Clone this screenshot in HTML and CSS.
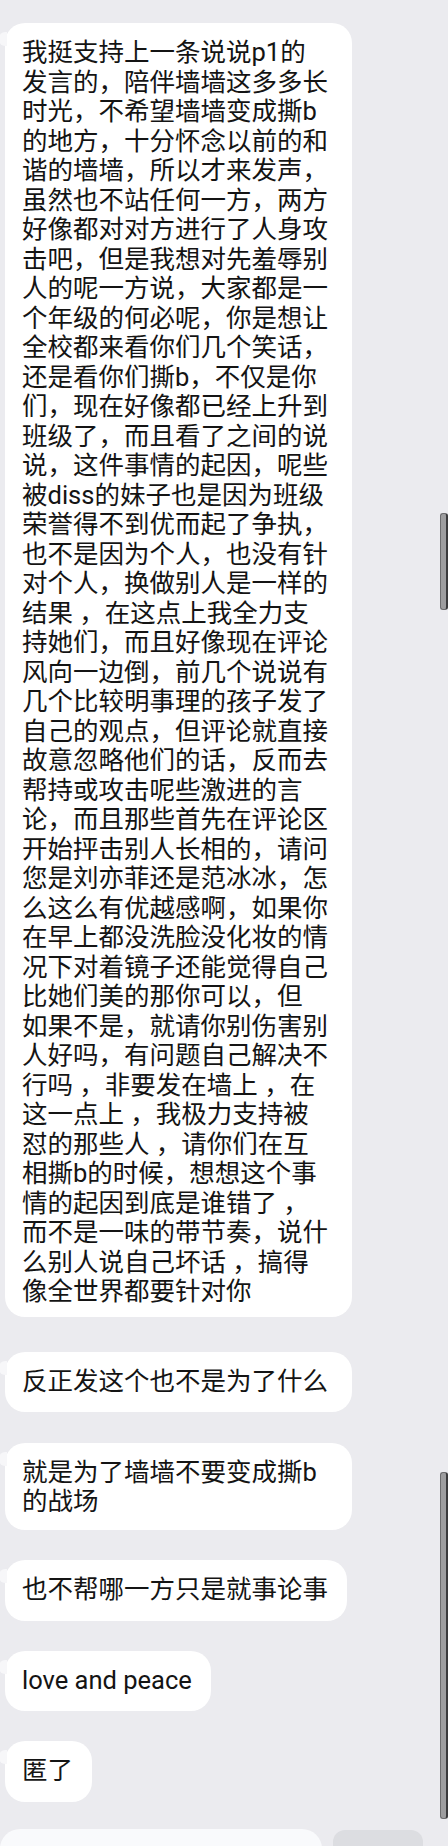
FILE: index.html
```html
<!DOCTYPE html>
<html lang="zh-CN">
<head>
<meta charset="utf-8">
<title>聊天记录</title>
<link rel="stylesheet" href="styles.css">
</head>
<body>
<div class="chat">
  <div class="bubble bubble-wide bubble-long">我挺支持上一条说说p1的<br>发言的，陪伴墙墙这多多长<br>时光，不希望墙墙变成撕b<br>的地方，十分怀念以前的和<br>谐的墙墙，所以才来发声，<br>虽然也不站任何一方，两方<br>好像都对对方进行了人身攻<br>击吧，但是我想对先羞辱别<br>人的呢一方说，大家都是一<br>个年级的何必呢，你是想让<br>全校都来看你们几个笑话，<br>还是看你们撕b，不仅是你<br>们，现在好像都已经上升到<br>班级了，而且看了之间的说<br>说，这件事情的起因，呢些<br>被diss的妹子也是因为班级<br>荣誉得不到优而起了争执，<br>也不是因为个人，也没有针<br>对个人，换做别人是一样的<br>结果 ，在这点上我全力支<br>持她们，而且好像现在评论<br>风向一边倒，前几个说说有<br>几个比较明事理的孩子发了<br>自己的观点，但评论就直接<br>故意忽略他们的话，反而去<br>帮持或攻击呢些激进的言<br>论，而且那些首先在评论区<br>开始抨击别人长相的，请问<br>您是刘亦菲还是范冰冰，怎<br>么这么有优越感啊，如果你<br>在早上都没洗脸没化妆的情<br>况下对着镜子还能觉得自己<br>比她们美的那你可以，但<br>如果不是，就请你别伤害别<br>人好吗，有问题自己解决不<br>行吗 ，非要发在墙上 ，在<br>这一点上 ，我极力支持被<br>怼的那些人 ，请你们在互<br>相撕b的时候，想想这个事<br>情的起因到底是谁错了 ，<br>而不是一味的带节奏，说什<br>么别人说自己坏话 ，搞得<br>像全世界都要针对你</div>
  <div class="bubble bubble-wide bubble-gap-31">反正发这个也不是为了什么</div>
  <div class="bubble bubble-wide bubble-two">就是为了墙墙不要变成撕b<br>的战场</div>
  <div class="bubble">也不帮哪一方只是就事论事</div>
  <div class="bubble">love and peace</div>
  <div class="bubble bubble-last">匿了</div>
  <div class="bottom-row">
    <div class="bottom-bubble"></div>
    <div class="bottom-box"></div>
  </div>
</div>
<div class="thumb thumb-1"></div>
<div class="thumb thumb-2"></div>
</body>
</html>
```
FILE: styles.css
```css
html, body {
  margin: 0;
  padding: 0;
}
body {
  width: 448px;
  height: 1846px;
  overflow: hidden;
  background: #ebebef;
  font-family: Roboto, "Noto Sans CJK SC", sans-serif;
  color: #141414;
  position: relative;
}
.chat {
  display: flex;
  flex-direction: column;
  align-items: flex-start;
  padding: 23px 0 0 5px;
}
.bubble {
  position: relative;
  background: #ffffff;
  border-radius: 20px;
  font-size: 25.5px;
  line-height: 29.5px;
  padding: 15px 19px 16px 17px;
  margin-bottom: 30px;
  white-space: nowrap;
}
.bubble::before {
  content: "";
  position: absolute;
  left: -6px;
  top: 9px;
  width: 8px;
  height: 14px;
  background: #f7f7f9;
  border-radius: 6px 0 0 6px;
}
.bubble-wide {
  width: 347px;
  box-sizing: border-box;
}
.bubble-long {
  padding-bottom: 10px;
  margin-bottom: 35px;
}
.bubble-gap-31 {
  margin-bottom: 31px;
}
.bubble-two {
  line-height: 29px;
  padding-bottom: 14px;
}
.bubble-last {
  margin-bottom: 27px;
}
.bottom-row {
  display: flex;
  align-items: flex-start;
  gap: 11px;
  margin-left: -5px;
}
.bottom-bubble {
  width: 322px;
  height: 40px;
  background: #f9fafc;
  border-radius: 20px 20px 0 0;
}
.bottom-box {
  width: 90px;
  height: 40px;
  margin-top: 1px;
  background: #dcdde1;
  border-radius: 12px 12px 0 0;
}
.thumb {
  position: absolute;
  left: 440px;
  width: 5px;
  background: #9d9d9f;
  border: 1px solid #6c6c6e;
  border-right: 2px solid #3a3a3c;
  border-radius: 3px;
}
.thumb-1 {
  top: 513px;
  height: 95px;
}
.thumb-2 {
  top: 1472px;
  height: 345px;
}
```
